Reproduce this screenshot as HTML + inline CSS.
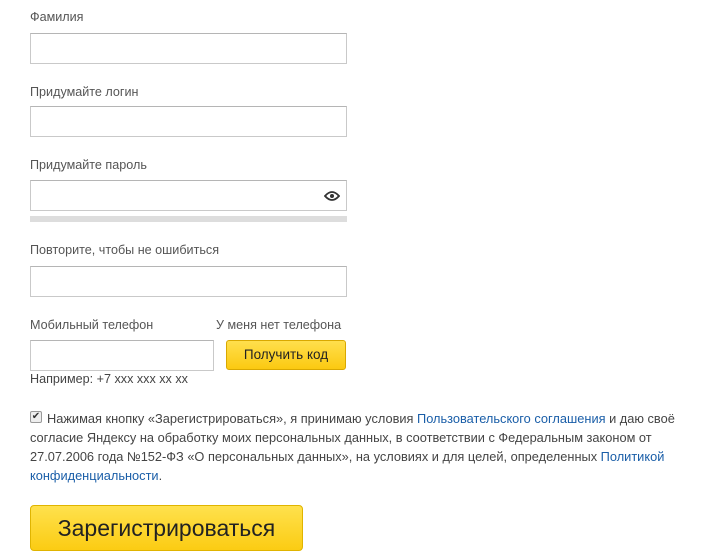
<!DOCTYPE html>
<html><head><meta charset="utf-8"><style>
body{margin:0;background:#fff;font-family:"Liberation Sans",Arial,sans-serif;width:725px;height:551px;overflow:hidden;position:relative;color:#444}
.a{position:absolute}
.l{font-size:12.6px;color:#555}
.i{position:absolute;border:1px solid #c9c9c9;border-top-color:#b5b5b5;background:#fff;box-sizing:border-box}
a{color:#1a5ea8;text-decoration:none}
</style></head><body>
<div class="a l" style="left:30px;top:10px">Фамилия</div>
<div class="i" style="left:30px;top:33px;width:317px;height:31px"></div>
<div class="a l" style="left:30px;top:85px">Придумайте логин</div>
<div class="i" style="left:30px;top:106px;width:317px;height:31px"></div>
<div class="a l" style="left:30px;top:158px">Придумайте пароль</div>
<div class="i" style="left:30px;top:180px;width:317px;height:31px"></div>
<svg class="a" style="left:324px;top:189px" width="16" height="14" viewBox="0 0 16 14"><path d="M1 7Q8 -1 15 7Q8 15 1 7Z" fill="none" stroke="#333" stroke-width="1.8"/><circle cx="8" cy="7" r="2" fill="#333"/></svg>
<div class="a" style="left:30px;top:216px;width:317px;height:6px;background:#ddd"></div>
<div class="a l" style="left:30px;top:243px">Повторите, чтобы не ошибиться</div>
<div class="i" style="left:30px;top:266px;width:317px;height:31px"></div>
<div class="a l" style="left:30px;top:318px">Мобильный телефон</div>
<div class="a l" style="left:216px;top:318px">У меня нет телефона</div>
<div class="i" style="left:30px;top:340px;width:184px;height:31px"></div>
<div class="a" style="left:226px;top:340px;width:120px;height:30px;box-sizing:border-box;border:1px solid #d9a800;border-radius:3px;background:linear-gradient(#ffdf4d,#fbc911);font-size:13.5px;color:#222;text-align:center;line-height:28px">Получить код</div>
<div class="a l" style="left:30px;top:372px;color:#444">Например: +7 xxx xxx xx xx</div>
<div class="a" style="left:30px;top:411px;width:12px;height:12px;border:1px solid #999;border-radius:2px;background:#eee;box-sizing:border-box;font-size:10px;line-height:10px;text-align:center;color:#333">✔</div>
<div class="a" style="left:30px;top:409px;width:655px;font-size:12.8px;line-height:19px;color:#444;text-indent:17px">Нажимая кнопку «Зарегистрироваться», я принимаю условия <a>Пользовательского соглашения</a> и даю своё согласие Яндексу на обработку моих персональных данных, в соответствии с Федеральным законом от 27.07.2006 года №152-ФЗ «О персональных данных», на условиях и для целей, определенных <a>Политикой конфиденциальности</a>.</div>
<div class="a" style="left:30px;top:505px;width:273px;height:46px;border-radius:4px;background:linear-gradient(#ffe14d,#fbcc13);border:1px solid #e0b400;box-sizing:border-box;font-size:23px;color:#222;text-align:center;line-height:44px">Зарегистрироваться</div>
</body></html>
